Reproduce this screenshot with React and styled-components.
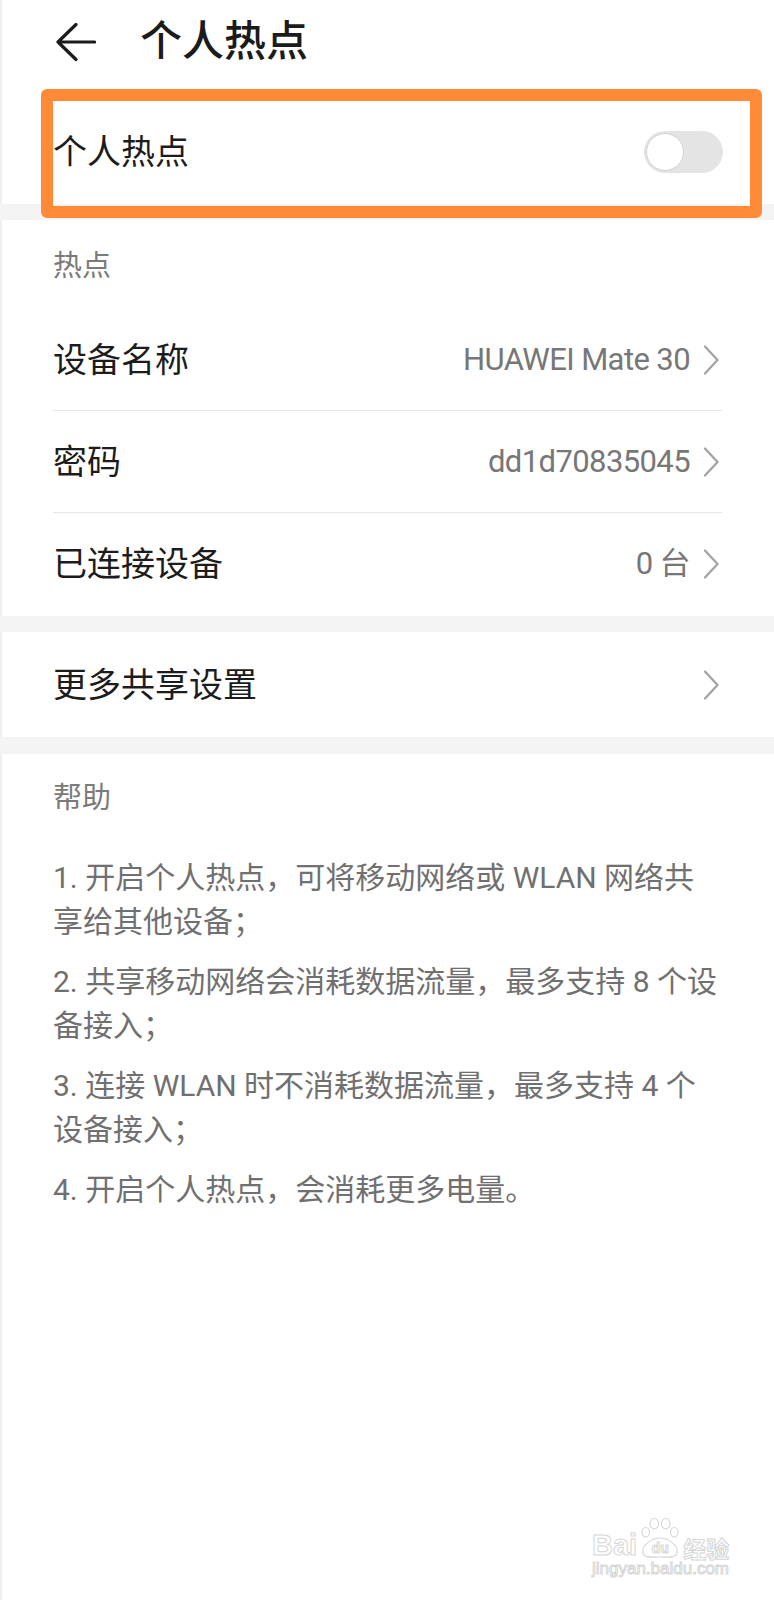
import styled, { createGlobalStyle } from "styled-components";

const GlobalStyle = createGlobalStyle`
  body {
    margin: 0;
    background: #ffffff;
    font-family: Roboto, "Noto Sans CJK SC", sans-serif;
  }
`;

const Page = styled.div`
  position: relative;
  width: 774px;
  min-height: 1600px;
  background: #ffffff;
  box-shadow: inset 2px 0 0 #efefef;
`;

const Header = styled.header`
  display: flex;
  align-items: center;
  gap: 44px;
  height: 84px;
  padding-left: 56px;
`;

const Title = styled.h1`
  margin: 0;
  font-size: 42px;
  font-weight: 500;
  line-height: 1;
  color: #1b1b1b;
`;

const ToggleRow = styled.div`
  position: relative;
  display: flex;
  align-items: center;
  justify-content: space-between;
  height: 120px;
  box-sizing: border-box;
  padding: 16px 51px 0 53px;
`;

// orange annotation frame drawn over the first row
const Highlight = styled.div`
  position: absolute;
  top: 5px;
  left: 41px;
  right: 12px;
  bottom: -14px;
  border: 12px solid #ff8b38;
  border-radius: 6px;
  pointer-events: none;
`;

const Label = styled.span`
  font-size: 34px;
  line-height: 1;
  color: #1c1c1c;
`;

const Switch = styled.div`
  position: relative;
  width: 79px;
  height: 42px;
  border-radius: 21px;
  background: #e4e4e4;
`;

const Knob = styled.div`
  position: absolute;
  top: 2px;
  left: 2px;
  width: 36px;
  height: 36px;
  border-radius: 50%;
  background: #ffffff;
  border: 1px solid #d2d2d2;
`;

const Band = styled.div`
  height: ${props => props.h || 16}px;
  background: #f4f4f4;
`;

const SectionTitle = styled.div`
  padding: ${props => props.pad || "32px 53px 29px"};
  font-size: 29px;
  line-height: 28px;
  color: #7a7a7a;
`;

const List = styled.div`
  margin: 0 52px 0 53px;
  padding-bottom: ${props => props.bottom || 0}px;
`;

const Row = styled.div`
  display: flex;
  align-items: center;
  height: ${props => props.h || 101}px;
  border-bottom: ${props => (props.last ? "none" : "1px solid #e6e6e6")};
`;

const Value = styled.span`
  margin-left: auto;
  font-size: 31px;
  line-height: 1;
  letter-spacing: -0.6px;
  color: #777777;
`;

const ChevronIcon = styled.svg`
  flex: none;
  margin-left: ${props => (props.alone ? "auto" : "13px")};
  margin-right: -2px;
`;

const HelpBody = styled.div`
  padding: 0 53px;
`;

const Para = styled.p`
  margin: 0 0 16px;
  font-size: 30px;
  line-height: 44px;
  color: #707070;
`;

const Line = styled.span`
  display: block;
  white-space: nowrap;
`;

// baidu jingyan watermark, lies over the page
const Watermark = styled.div`
  position: absolute;
  left: 592px;
  top: 1516px;
  display: flex;
  flex-direction: column;
  align-items: flex-start;
  pointer-events: none;
`;

const MarkRow = styled.div`
  display: flex;
  align-items: flex-end;
  gap: 3px;
`;

const Outline = styled.span`
  font-family: ${props => (props.cjk ? '"Noto Sans CJK SC", sans-serif' : '"Liberation Sans", sans-serif')};
  font-size: ${props => props.size}px;
  font-weight: ${props => (props.light ? 400 : 700)};
  line-height: 1;
  color: #ffffff;
  -webkit-text-stroke: 1px #d6d6d6;
`;

const PawBox = styled.div`
  position: relative;
  display: flex;
  align-items: flex-end;
  justify-content: center;
  width: 40px;
  height: 44px;
  padding-bottom: 5px;
  box-sizing: border-box;

  svg {
    position: absolute;
    inset: 0;
  }

  span {
    position: relative;
  }
`;

function Chevron({ alone }) {
  return (
    <ChevronIcon alone={alone} width="21" height="30" viewBox="0 0 21 30">
      <path d="M2 1.5 L14.5 15 L2 28.5" fill="none" stroke="#a3a3a3" strokeWidth="2.3" strokeLinecap="round" strokeLinejoin="round" />
    </ChevronIcon>
  );
}

function BackArrow() {
  return (
    <svg width="40" height="40" viewBox="0 0 40 40">
      <path d="M38.5 20 H2 M20 2.5 L2 20 L20 37.5" fill="none" stroke="#1b1b1b" strokeWidth="3.2" strokeLinecap="round" strokeLinejoin="round" />
    </svg>
  );
}

function Paw() {
  return (
    <PawBox>
      <svg width="40" height="44" viewBox="0 0 42 44">
        <g fill="#ffffff" stroke="#d6d6d6" strokeWidth="1.2">
          <ellipse cx="6" cy="16" rx="4" ry="5" />
          <ellipse cx="15" cy="7" rx="4.5" ry="5.5" />
          <ellipse cx="27" cy="7" rx="4.5" ry="5.5" />
          <ellipse cx="36" cy="16" rx="4" ry="5" />
          <path d="M21 22 C30 22 40 30 39 37 C38 43 31 42 21 42 C11 42 4 43 3 37 C2 30 12 22 21 22 Z" />
        </g>
      </svg>
      <Outline size={14}>du</Outline>
    </PawBox>
  );
}

const helpItems = [
  ["1. 开启个人热点，可将移动网络或 WLAN 网络共", "享给其他设备；"],
  ["2. 共享移动网络会消耗数据流量，最多支持 8 个设", "备接入；"],
  ["3. 连接 WLAN 时不消耗数据流量，最多支持 4 个", "设备接入；"],
  ["4. 开启个人热点，会消耗更多电量。"],
];

const rows = [
  { label: "设备名称", value: "HUAWEI Mate 30" },
  { label: "密码", value: "dd1d70835045" },
  { label: "已连接设备", value: "0 台" },
];

export default function App() {
  return (
    <Page>
      <GlobalStyle />
      <Header>
        <BackArrow />
        <Title>个人热点</Title>
      </Header>

      <ToggleRow>
        <Label>个人热点</Label>
        <Switch>
          <Knob />
        </Switch>
        <Highlight />
      </ToggleRow>

      <Band h={16} />

      <SectionTitle>热点</SectionTitle>
      <List bottom={2}>
        {rows.map((r, i) => (
          <Row key={r.label} last={i === rows.length - 1}>
            <Label>{r.label}</Label>
            <Value>{r.value}</Value>
            <Chevron />
          </Row>
        ))}
      </List>

      <Band h={16} />

      <List>
        <Row h={105} last>
          <Label>更多共享设置</Label>
          <Chevron alone />
        </Row>
      </List>

      <Band h={17} />

      <SectionTitle pad="30px 53px 44px">帮助</SectionTitle>
      <HelpBody>
        {helpItems.map((lines, i) => (
          <Para key={i}>
            {lines.map(l => (
              <Line key={l}>{l}</Line>
            ))}
          </Para>
        ))}
      </HelpBody>

      <Watermark>
        <MarkRow>
          <Outline size={29}>Bai</Outline>
          <Paw />
          <Outline cjk size={23}>经验</Outline>
        </MarkRow>
        <Outline light size={17}>jingyan.baidu.com</Outline>
      </Watermark>
    </Page>
  );
}
